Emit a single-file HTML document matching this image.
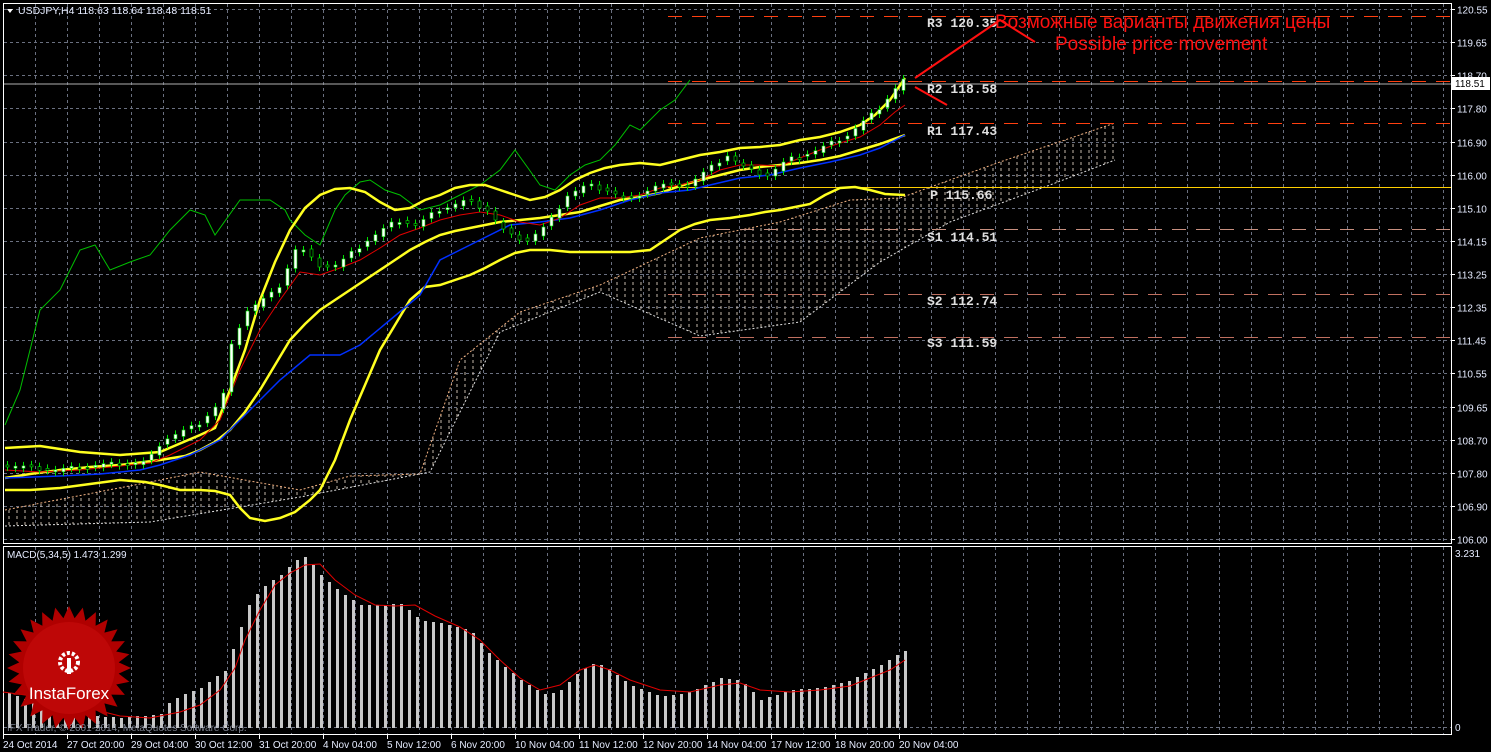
<!DOCTYPE html>
<html><head><meta charset="utf-8"><style>
html,body{margin:0;padding:0;background:#000;width:1491px;height:752px;overflow:hidden}
svg{display:block}
text{font-family:"Liberation Sans",sans-serif;fill:#e6ecff;font-size:10px}
.pv{font-family:"Liberation Mono",monospace;font-weight:bold;font-size:13px;fill:#e0e0e0}
</style></head><body>
<svg id="s" width="1491" height="752" xmlns="http://www.w3.org/2000/svg">
<defs>
<pattern id="hatch" width="8" height="6" patternUnits="userSpaceOnUse">
<line x1="1" y1="0" x2="1" y2="3" stroke="#e8d8c8" stroke-width="1"/>
</pattern>
</defs>
<rect width="1491" height="752" fill="#000"/>
<g id="grid" stroke="#6a7080" stroke-dasharray="3,3" stroke-width="1"></g>
<rect x="3.5" y="3.5" width="1448" height="540" fill="none" stroke="#fff"/>
<rect x="3.5" y="546.5" width="1448" height="188" fill="none" stroke="#fff"/>
<line x1="4" y1="84" x2="1451" y2="84" stroke="#b0b0b0"/>
<polygon fill="url(#hatch)" opacity="0.85" points="5,510 150,482 200,472 300,490 350,476 420,474 460,360 520,312 600,285 700,238 780,222 850,200 900,198 1000,162 1115,123 1115,160 1050,185 950,222 880,262 800,322 700,336 600,292 500,332 430,472 300,497 150,522 5,526"/>
<g fill="none" stroke-width="1">
<polyline stroke="#f0b080" stroke-dasharray="2,2" points="5,510 150,482 200,472 300,490 350,476 420,474 460,360 520,312 600,285 700,238 780,222 850,200 900,198 1000,162 1115,123"/>
<polyline stroke="#e0e0e0" stroke-dasharray="2,2" points="5,526 150,522 300,497 430,472 500,332 600,292 700,336 800,322 880,262 950,222 1050,185 1115,160"/>
</g>
<g stroke-width="1">
<line x1="668" y1="16.5" x2="1451" y2="16.5" stroke="#ff4010" stroke-dasharray="14,10"/>
<line x1="668" y1="81.5" x2="1451" y2="81.5" stroke="#ff4010" stroke-dasharray="14,10"/>
<line x1="668" y1="123.5" x2="1451" y2="123.5" stroke="#ff4010" stroke-dasharray="14,10"/>
<line x1="668" y1="187.5" x2="1451" y2="187.5" stroke="#ffd000"/>
<line x1="668" y1="229.5" x2="1451" y2="229.5" stroke="#c89080" stroke-dasharray="14,10"/>
<line x1="668" y1="294.5" x2="1451" y2="294.5" stroke="#c07060" stroke-dasharray="14,10"/>
<line x1="668" y1="337.5" x2="1451" y2="337.5" stroke="#c07060" stroke-dasharray="14,10"/>
</g>
<text class="pv" x="927" y="27">R3 120.35</text>
<text class="pv" x="927" y="93">R2 118.58</text>
<text class="pv" x="927" y="135">R1 117.43</text>
<text class="pv" x="930" y="199">P 115.66</text>
<text class="pv" x="927" y="241">S1 114.51</text>
<text class="pv" x="927" y="305">S2 112.74</text>
<text class="pv" x="927" y="347">S3 111.59</text>
<g fill="none">
<polyline stroke="#00c000" stroke-width="1" points="5,425 20,390 40,310 60,290 80,250 95,245 110,270 130,262 150,255 170,230 190,210 205,215 215,235 240,200 270,200 285,210 290,220 305,235 320,245 335,210 345,195 360,182 370,180 385,190 400,195 420,210 440,205 460,195 480,185 500,170 515,150 528,168 540,185 555,190 570,175 585,165 600,160 615,145 630,125 640,130 660,110 675,100 690,80"/>
<polyline stroke="#ffff20" stroke-width="2.5" points="5,448 40,446 80,452 120,455 160,452 200,435 215,428 230,390 245,350 260,300 275,262 290,230 305,208 320,195 335,189 350,188 365,192 380,202 395,210 410,208 425,200 440,195 455,188 470,185 485,185 500,190 515,195 530,200 545,197 560,190 575,180 590,173 605,168 620,165 640,163 660,165 680,160 700,155 720,152 740,148 760,147 780,145 800,140 820,137 840,132 860,125 875,115 890,100 905,78"/>
<polyline stroke="#ffff20" stroke-width="2.5" points="5,478 30,474 60,470 90,467 120,465 160,460 185,456 200,450 215,442 230,430 245,412 260,390 275,365 290,340 305,324 320,310 335,300 350,290 365,280 380,270 395,260 410,250 425,242 440,235 455,231 470,228 485,225 500,222 520,220 540,218 560,215 580,212 600,206 620,200 640,197 660,193 680,186 700,180 720,175 740,170 760,167 780,165 800,163 820,160 840,156 860,150 880,144 905,135"/>
<polyline stroke="#ffff20" stroke-width="2.5" points="5,490 30,490 60,488 90,484 120,480 145,482 160,485 180,490 200,490 215,491 230,495 240,508 250,518 265,521 280,518 295,512 310,500 320,490 335,460 350,420 365,385 380,350 395,325 410,300 425,287 440,285 455,280 470,275 485,268 500,260 515,253 530,250 550,250 570,252 590,252 610,252 630,252 650,250 665,240 680,230 695,224 710,220 730,218 750,215 765,212 780,210 795,207 810,204 825,195 840,188 855,187 870,190 885,194 905,195"/>
<polyline stroke="#0030ff" stroke-width="1.5" points="5,478 60,476 100,474 140,470 160,465 190,455 220,440 250,410 280,380 310,355 340,355 360,345 390,320 420,295 440,260 460,250 480,240 510,225 540,222 570,218 600,210 630,200 660,193 690,190 710,185 740,178 770,175 800,168 830,162 860,155 880,148 905,135"/>
<polyline stroke="#e00000" stroke-width="1" points="5,470 40,472 80,470 120,466 150,463 170,455 200,440 220,420 240,370 260,330 280,300 300,272 320,275 340,268 360,260 380,248 400,235 420,228 440,220 460,215 480,212 500,215 520,222 540,225 560,218 580,205 600,198 620,198 640,195 660,188 680,185 700,180 720,170 740,165 760,165 780,166 800,158 820,150 840,143 860,137 880,125 895,112 905,105"/>
</g>
<g id="candles"></g>
<g stroke="#ff1010" stroke-width="2" fill="none">
<polyline points="915,78 1000,20 1035,42"/>
<polyline points="915,87 947,105"/>
</g>
<text x="995" y="28" style="fill:#ff1010;font-size:19px">Возможные варианты движения цены</text>
<text x="1055" y="50" style="fill:#ff1010;font-size:19px">Possible price movement</text>
<polygon points="7,9 13,9 10,13" fill="#fff"/>
<text x="18" y="14" style="font-size:10.5px">USDJPY,H4  118.63 118.64 118.48 118.51</text>
<g id="axis"></g>
<rect x="1452" y="77" width="38" height="13" fill="#fff"/>
<text x="1455" y="87" style="fill:#000">118.51</text>
<text x="7" y="558">MACD(5,34,5) 1.473 1.299</text>
<text x="1455" y="557">3.231</text>
<text x="1455" y="731">0</text>
<g id="macd"></g>
<polyline fill="none" stroke="#e00000" stroke-width="1" points="3,692 40,697 80,706 120,716 150,718 180,712 200,705 220,690 235,668 245,640 260,610 275,585 290,573 305,565 320,564 335,580 355,595 375,605 395,606 415,605 435,616 460,627 480,640 500,660 520,678 540,690 560,685 580,670 595,665 610,670 630,680 660,690 690,692 720,685 740,683 760,690 790,692 820,690 850,686 870,678 890,670 905,660"/>
<g transform="translate(69,668)">
<polygon id="star" fill="#b00000"></polygon>
<circle r="46" fill="#c00808" opacity="0.9"/>
<circle cx="0" cy="-6" r="9" fill="none" stroke="#fff" stroke-width="4" stroke-dasharray="3,2"/>
<rect x="-2" y="-10" width="4" height="16" fill="#fff"/>
<text x="0" y="31" text-anchor="middle" style="fill:#fff;font-size:17px">InstaForex</text>
</g>
<text x="7" y="731" style="fill:#9aa0b0;opacity:0.8">IFX Trader, © 2001-2014, MetaQuotes Software Corp.</text>
<g id="dates"></g>
</svg>
<script>
(function(){
var NS="http://www.w3.org/2000/svg";
function el(p,t,a,txt){var e=document.createElementNS(NS,t);for(var k in a)e.setAttribute(k,a[k]);if(txt)e.textContent=txt;document.getElementById(p).appendChild(e);return e;}
for(var x=35;x<1451;x+=32){el('grid','line',{x1:x+.5,y1:4,x2:x+.5,y2:543});el('grid','line',{x1:x+.5,y1:547,x2:x+.5,y2:734});}
var prices=["120.55","119.65","118.70","117.80","116.90","116.00","115.10","114.15","113.25","112.35","111.45","110.55","109.65","108.70","107.80","106.90","106.00"];
for(var i=0;i<17;i++){var y=Math.round(9+i*33.125)+.5;el('grid','line',{x1:4,y1:y,x2:1451,y2:y});el('axis','line',{x1:1451,y1:y,x2:1455,y2:y,stroke:'#fff'});el('axis','text',{x:1457,y:y+4},prices[i]);}
el('grid','line',{x1:4,y1:727.5,x2:1451,y2:727.5});
var dates=["24 Oct 2014","27 Oct 20:00","29 Oct 04:00","30 Oct 12:00","31 Oct 20:00","4 Nov 04:00","5 Nov 12:00","6 Nov 20:00","10 Nov 04:00","11 Nov 12:00","12 Nov 20:00","14 Nov 04:00","17 Nov 12:00","18 Nov 20:00","20 Nov 04:00"];
for(var i=0;i<dates.length;i++){var x=3+i*64;el('dates','line',{x1:x+.5,y1:735,x2:x+.5,y2:739,stroke:'#fff'});el('dates','text',{x:x,y:748},dates[i]);}
function interp(pts,x){if(x<=pts[0][0])return pts[0][1];for(var i=0;i<pts.length-1;i++){if(x>=pts[i][0]&&x<=pts[i+1][0]){var t=(x-pts[i][0])/(pts[i+1][0]-pts[i][0]);return pts[i][1]+t*(pts[i+1][1]-pts[i][1]);}}return pts[pts.length-1][1];}
var m=[[8,693],[40,705],[80,715],[120,718],[160,714],[170,700],[200,688],[225,670],[235,640],[250,600],[265,585],[280,575],[295,560],[305,557],[320,575],[340,592],[360,605],[380,605],[400,604],[420,620],[450,625],[470,630],[490,655],[520,680],[545,695],[560,690],[580,670],[595,662],[610,670],[630,685],[660,697],[690,692],[720,678],[740,680],[760,700],[790,690],[820,688],[850,680],[880,665],[905,650]];
for(var x=8;x<=906;x+=8){var tt=Math.round(interp(m,x));el('macd','rect',{x:x,y:tt,width:3,height:728-tt,fill:'#c8c8c8'});}
var p=[[5,465],[60,470],[100,465],[150,462],[165,440],[200,425],[225,400],[235,340],[250,310],[280,290],[300,245],[320,265],[340,265],[370,240],[400,220],[420,225],[440,210],[470,200],[490,210],[510,235],[530,240],[550,225],[570,195],[590,185],[610,190],[630,200],[660,185],[690,185],[710,170],[730,155],[750,170],[770,175],[790,160],[820,150],[850,135],[880,110],[905,80]];
for(var x=6;x<=905;x+=8){var a=interp(p,x-4)+((x*7)%5-2),b=interp(p,x+4)+((x*3)%5-2);var ty=Math.min(a,b),h=Math.max(2,Math.abs(a-b));var up=b<a;
el('candles','line',{x1:x+1.5,y1:ty-4,x2:x+1.5,y2:ty+h+4,stroke:'#00e000'});
el('candles','rect',{x:x,y:ty,width:3,height:h,fill:up?'#fff':'#000',stroke:'#00e000','stroke-width':0.6});}
var pts=[];for(var i=0;i<56;i++){var r=(i%2?50:62),an=i*Math.PI/28;pts.push((r*Math.cos(an)).toFixed(1)+','+(r*Math.sin(an)).toFixed(1));}
document.getElementById('star').setAttribute('points',pts.join(' '));
})();
</script>
</body></html>
